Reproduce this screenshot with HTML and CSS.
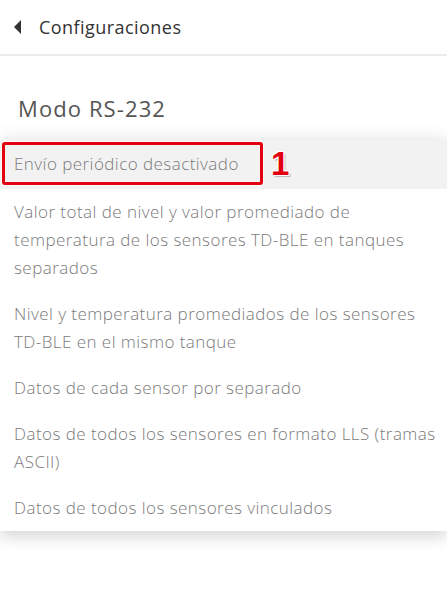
FILE: index.html
```html
<!DOCTYPE html>
<html lang="es">
<head>
  <meta charset="UTF-8">
  <title>Modo RS-232</title>
  <link rel="stylesheet" href="styles.css">
</head>
<body>
  <header class="topbar">
    <span class="back"></span>
    <span class="topbar-title">Configuraciones</span>
  </header>

  <h2 class="section-title">Modo RS-232</h2>

  <ul class="options">
    <li class="option selected">
      <span class="marker">Envío periódico desactivado</span>
      <span class="badge">1</span>
    </li>
    <li class="option">Valor total de nivel y valor promediado de temperatura de los sensores TD-BLE en tanques separados</li>
    <li class="option">Nivel y temperatura promediados de los sensores TD-BLE en el mismo tanque</li>
    <li class="option">Datos de cada sensor por separado</li>
    <li class="option">Datos de todos los sensores en formato LLS (tramas ASCII)</li>
    <li class="option">Datos de todos los sensores vinculados</li>
  </ul>
</body>
</html>
```

FILE: styles.css
```css
body {
  margin: 0;
  font-family: "Open Sans", "Lato", sans-serif;
  background: #fff;
  width: 447px;
  height: 599px;
  overflow: hidden;
}
.topbar {
  height: 56px;
  display: flex;
  align-items: center;
  padding-left: 14px;
  border-bottom: 2px solid #ececf0;
  box-sizing: border-box;
}
.back {
  width: 0;
  height: 0;
  border-top: 7px solid transparent;
  border-bottom: 7px solid transparent;
  border-right: 7px solid #333;
  margin-right: 18px;
}
.topbar-title {
  font-size: 18px;
  color: #333;
  letter-spacing: 0.45px;
}
.section-title {
  margin: 0;
  padding: 37px 0 0 18px;
  height: 47px;
  font-size: 22px;
  font-weight: 500;
  color: #555;
  letter-spacing: 1.1px;
}
.options {
  list-style: none;
  margin: 0;
  padding: 0;
  background: #fff;
  box-shadow: 0 6px 14px rgba(0, 0, 0, 0.16), 0 -8px 14px rgba(0, 0, 0, 0.04);
}
.option {
  padding: 9px 8px 9px 14px;
  font-size: 17px;
  line-height: 28px;
  color: #7a7a7a;
  font-weight: 300;
  letter-spacing: 0.45px;
}
.option.selected {
  background: #f2f2f2;
  padding: 2px 0 4px 2px;
  display: flex;
  align-items: center;
}
.marker {
  display: block;
  border: 3px solid #e3000f;
  border-radius: 3px;
  padding: 5px 9px 4px 9px;
  width: 237px;
  white-space: nowrap;
  box-shadow: 0 0 0 1px rgba(255, 255, 255, 0.6);
}
.badge {
  margin-left: 8px;
  font-family: "Liberation Sans", sans-serif;
  font-size: 33px;
  font-weight: bold;
  color: #e3000f;
  line-height: 1;
  text-shadow: 1px 1px 0 #fff, -1px -1px 0 #fff, 1px -1px 0 #fff, -1px 1px 0 #fff, 2px 2px 1px rgba(0, 0, 0, 0.25);
}
```
